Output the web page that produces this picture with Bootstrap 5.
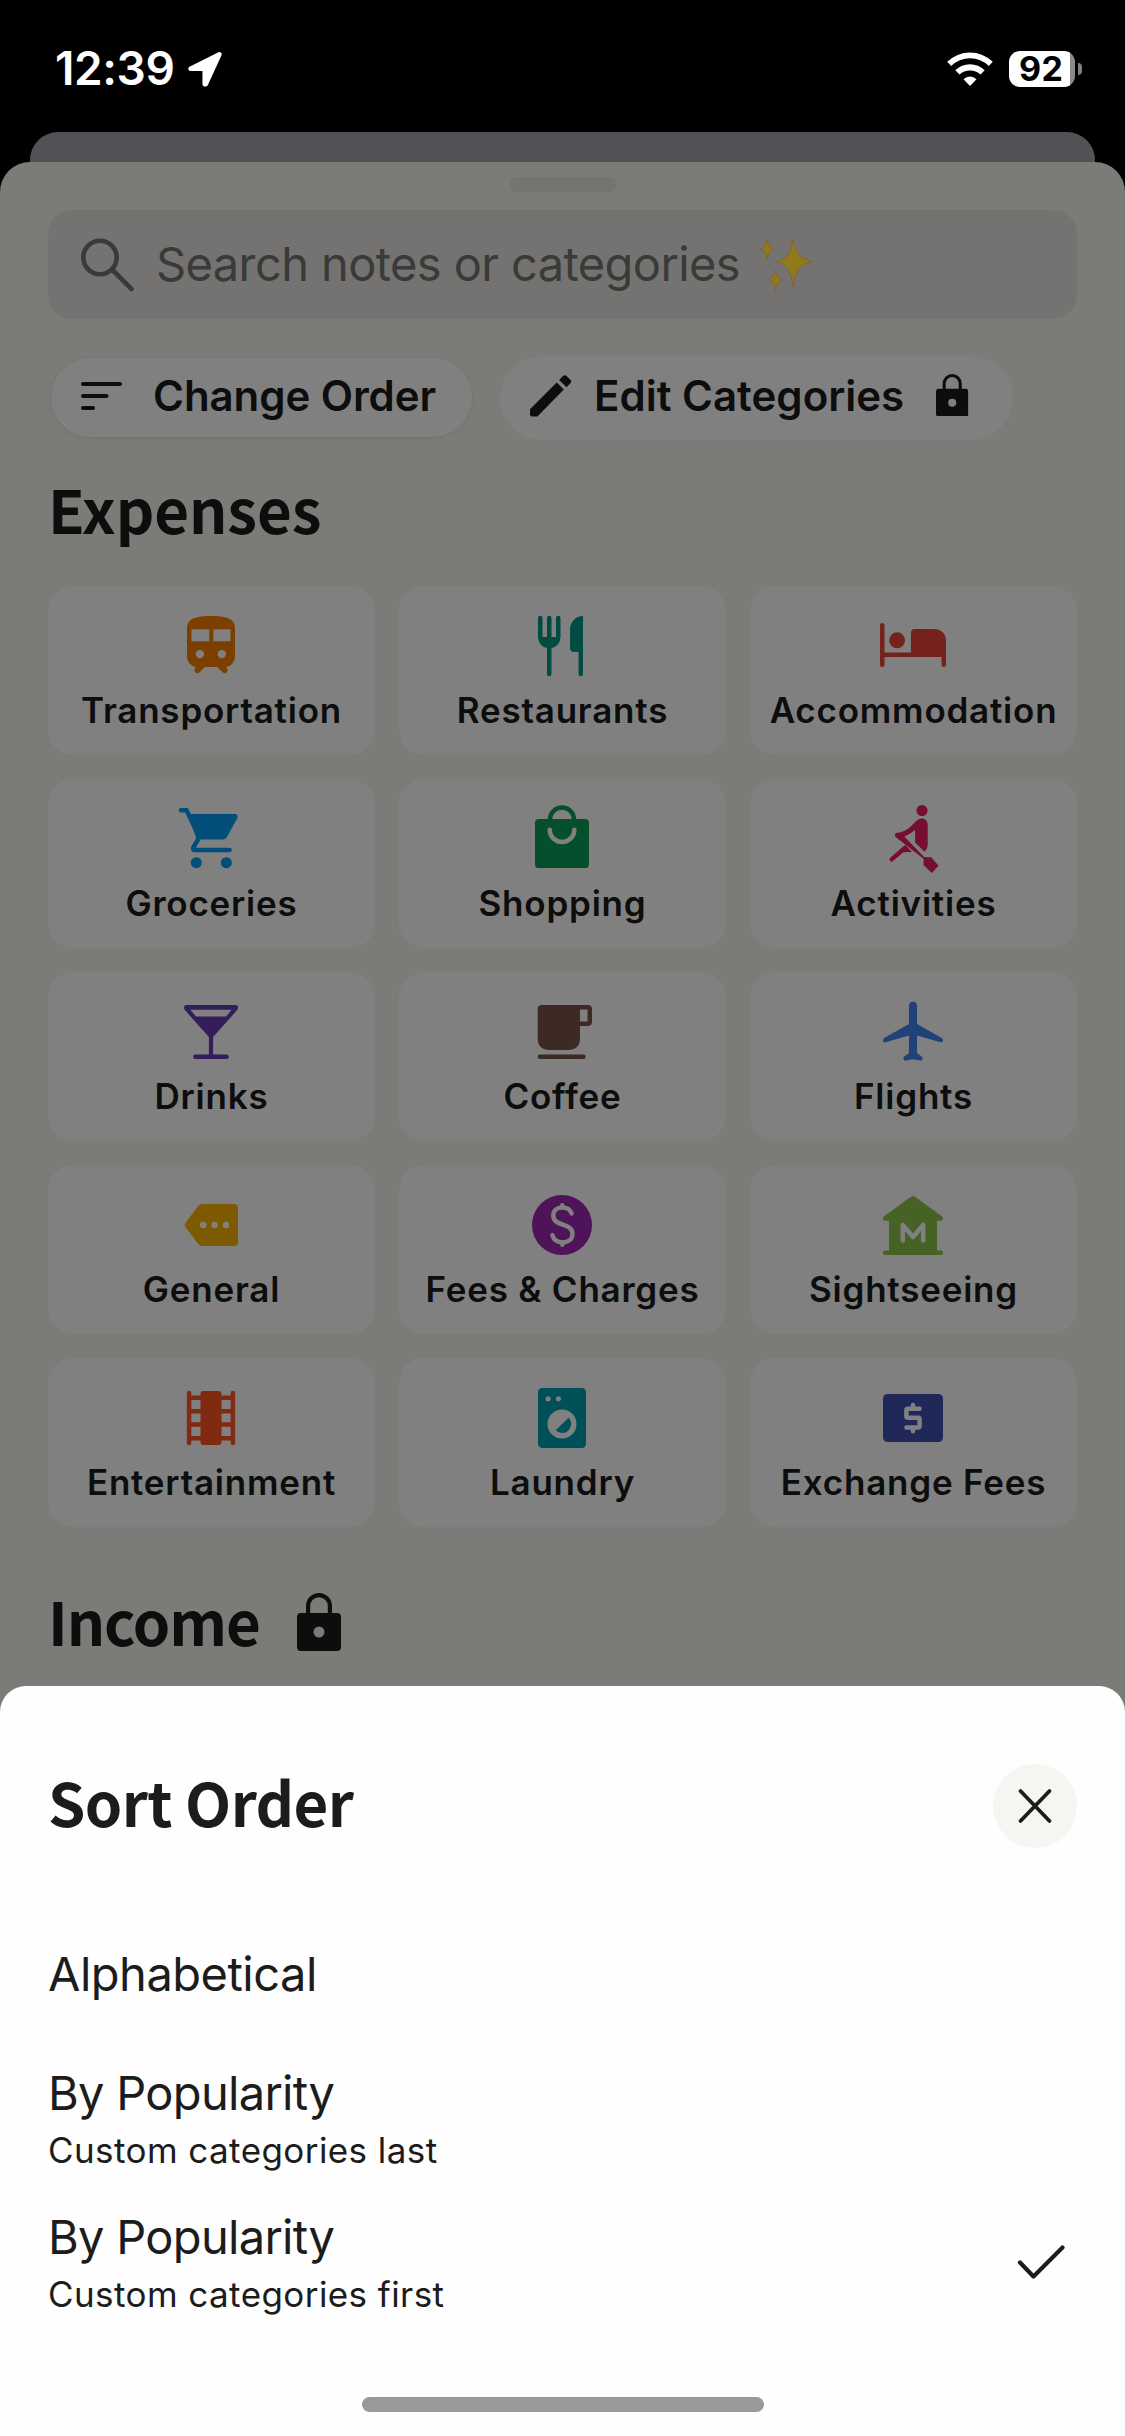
<!DOCTYPE html>
<html lang="en">
<head>
<meta charset="utf-8">
<meta name="viewport" content="width=device-width, initial-scale=1">
<title>Sort Order</title>
<link href="https://cdn.jsdelivr.net/npm/bootstrap@5.3.0/dist/css/bootstrap.min.css" rel="stylesheet">
<style>
  body { background: #000; color: #0d0d0d; font-family: Inter, "Liberation Sans", sans-serif; width: 1125px; height: 2436px; overflow: hidden; }
  svg { display: block; flex: none; }
  .status-bar { height: 132px; padding: 40px 43px 0 55px; }
  .clock { font-size: 46px; font-weight: 600; line-height: 56px; letter-spacing: -.4px; }
  .location-icon { margin: 11px 0 0 13px; }
  .status-right { margin-top: 11px; }
  .battery { width: 66px; height: 36px; border-radius: 11px; background: linear-gradient(90deg, #fff 61px, #8a8a8a 61px); color: #000; font-size: 34px; font-weight: 700; line-height: 36px; padding-left: 10px; letter-spacing: .5px; }
  .battery-tip { width: 4px; height: 12px; border-radius: 0 4px 4px 0; background: #7f7f7f; margin: 12px 0 0 3px; }
  .back-sheet { height: 30px; margin: 0 30px; border-radius: 28px 28px 0 0; background: #525256; }
  .app-sheet { height: 1554px; padding: 15px 48px 0; border-radius: 30px 30px 0 0; background: #7b7b78; }
  .grabber { width: 106px; height: 15px; border-radius: 6px; background: #747472; }
  .search-box { height: 109px; margin-top: 18px; padding: 0 33px; border-radius: 24px; background: #747371; color: #3a3a39; font-size: 47px; letter-spacing: -.6px; }
  .search-label { margin: 0 20px 1px 22px; line-height: 58px; }
  .pills { margin: 37px 0 0 3px; gap: 28px; color: #0d0d0d; }
  .pill { background: #808080; border-radius: 42px; font-size: 42px; font-weight: 600; line-height: 52px; }
  .pill-order { width: 421px; height: 79px; margin-top: 1.5px; padding: 0 0 2px 30px; box-shadow: 0 1px 4px rgba(0,0,0,.08); letter-spacing: -.07px; }
  .pill-order span { margin-left: 31px; }
  .pill-edit { width: 513px; height: 84px; padding: 0 0 5px 30px; }
  .pill-edit span { margin: 0 32px 0 22px; }
  .pill-lock { margin-bottom: 1px; }
  .title { font: 700 60px/60px "Noto Sans CJK SC", "Noto Sans", sans-serif; margin: 0; }
  .title-expenses { margin-top: 38px; letter-spacing: -.1px; }
  .tiles { display: grid; grid-template-columns: repeat(3, 1fr); gap: 24.1px 24px; margin-top: 48px; }
  .tile { height: 169px; padding-top: 24px; border-radius: 25px; background: #808080; font-size: 35px; font-weight: 600; line-height: 57px; letter-spacing: .78px; white-space: nowrap; }
  .tile svg { width: 72px; height: 72px; margin-right: 2px; fill: currentColor; }
  .tile span { color: #0d0d0d; }
  .c-orange { color: #7d3f00; } .c-teal { color: #004c43; } .c-red { color: #74221b; }
  .c-sky { color: #014e7a; } .c-green { color: #054f2c; } .c-pink { color: #750e31; }
  .c-violet { color: #331d5b; } .c-brown { color: #3d2a24; } .c-azure { color: #214279; }
  .c-amber { color: #7d5a00; } .c-purple { color: #4e1358; } .c-lime { color: #466225; }
  .c-rust { color: #802b11; } .c-cyan { color: #005059; } .c-navy { color: #1f2859; }
  .hole { fill: #808080; }
  .hole-line { fill: none; stroke: #808080; stroke-width: 1.5; stroke-linecap: round; stroke-linejoin: round; }
  .ink-line { fill: none; stroke: currentColor; stroke-width: 1.5; stroke-linecap: round; stroke-linejoin: round; }
  .income { margin-top: 63px; }
  .income .title { letter-spacing: -1.1px; }
  .income svg { margin: 3px 0 0 37px; }
  .bottom-sheet { height: 750px; margin-top: -30px; padding: 78px 48px 0; border-radius: 26px 26px 0 0; background: #fefefe; color: #1c1c1c; position: relative; }
  .sheet-title { padding-bottom: 10px; letter-spacing: -.6px; }
  .close-btn { width: 84px; height: 84px; background: #f6f5f2; }
  .option { font-size: 47px; line-height: 58px; letter-spacing: -.7px; }
  .option-alpha { margin-top: 97px; letter-spacing: -.5px; }
  .option-last { margin-top: 61px; }
  .option-first { margin-top: 37px; padding-right: 12px; }
  .option-note { font-size: 35px; line-height: 42px; letter-spacing: .42px; margin-top: 7px; }
  .home-bar { width: 402px; height: 15px; background: #999; margin-top: 82px; }
</style>
<script src="https://cdn.jsdelivr.net/npm/bootstrap@5.3.0/dist/js/bootstrap.bundle.min.js"></script>
</head>
<body>
<svg width="0" height="0" class="position-absolute">
  <symbol id="lock" viewBox="0 0 44 58"><path fill="#0d0d0d" fill-rule="evenodd" d="M9 20v-7a13 13 0 0 1 26 0v7h5a4 4 0 0 1 4 4v30a4 4 0 0 1-4 4H4a4 4 0 0 1-4-4V24a4 4 0 0 1 4-4zM13.200 20h17.600v-7a8.800 8.800 0 0 0-17.600 0zM22 33.500a5.500 5.500 0 1 0 0 11a5.500 5.500 0 1 0 0-11z"/></symbol>
</svg>

<header class="status-bar d-flex justify-content-between text-white">
  <div class="d-flex">
    <span class="clock">12:39</span>
    <svg class="location-icon" width="36" height="37" viewBox="0 0 36 37"><path d="M32.500 3.300 3.500 17.800h14.200v15.400h1z" fill="#fff" stroke="#fff" stroke-width="4.500" stroke-linejoin="round"/></svg>
  </div>
  <div class="status-right d-flex">
    <svg class="me-3" width="46" height="35" viewBox="0 0 46 35" fill="#fff"><path d="M23 35l-6.500-6.800a9.200 9.200 0 0 1 13 0z"/><path d="M12.500 23.600 8.300 19.300a21 21 0 0 1 29.400 0l-4.200 4.300a15.200 15.200 0 0 0-21 0z"/><path d="M4.200 15 .2 10.800a32.500 32.500 0 0 1 45.600 0l-4 4.200a26.800 26.800 0 0 0-37.600 0z"/></svg>
    <div class="battery">92</div>
    <div class="battery-tip"></div>
  </div>
</header>

<div class="back-sheet"></div>

<main class="app-sheet">
  <div class="grabber mx-auto"></div>
  <div class="search-box d-flex align-items-center">
    <svg width="53" height="54" viewBox="0 0 53 54" fill="none" stroke="#3a3a39" stroke-width="4.600" stroke-linecap="round"><circle cx="19" cy="19.500" r="16.700"/><path d="M31.500 32 50.500 51"/></svg>
    <span class="search-label">Search notes or categories</span>
    <svg width="56" height="54" viewBox="0 0 56 54" fill="#8f7b1d" stroke="#8b5f1d" stroke-width=".8"><path d="M33 1q1.500 20 20 22.500Q34.500 25.500 33 49 31.500 25.500 16 23.500 31.500 21.500 33 1z"/><path d="M7 1q.8 9 7.500 10.200Q7.800 12.300 7 22 6.200 12.300 0 11.200 6.200 10 7 1z"/><path d="M15.500 32q.8 8.500 7.500 9.800-6.700 1-7.500 10.700-.8-9.700-7.300-10.700 6.500-1.300 7.300-9.800z"/></svg>
  </div>

  <div class="pills d-flex align-items-start">
    <div class="pill pill-order d-flex align-items-center">
      <svg width="41" height="28" viewBox="0 0 41 28" stroke="#0d0d0d" stroke-width="4" stroke-linecap="round"><path d="M2 2h37M2 14h23.500M2 26h10"/></svg>
      <span>Change Order</span>
    </div>
    <div class="pill pill-edit d-flex align-items-center">
      <svg width="42" height="42" viewBox="0 0 42 42" fill="#0d0d0d"><path d="M0 34.200 26.700 7.500l7.100 7.100L7.400 41.500H2a2 2 0 0 1-2-2zM29.200 5l3.600-3.800a2.800 2.800 0 0 1 4 0l3.400 3.400a2.800 2.800 0 0 1 0 4l-3.700 3.600z"/></svg>
      <span>Edit Categories</span>
      <svg class="pill-lock" width="32.400" height="42.700"><use href="#lock"/></svg>
    </div>
  </div>

  <h2 class="title title-expenses">Expenses</h2>

  <section class="tiles">
    <div class="tile c-orange d-flex flex-column align-items-center">
      <svg viewBox="0 0 24 24"><path d="M12 2C7.500 2 4 2.700 4 6v9.500A3.500 3.500 0 0 0 7 19l-.3.300a1.050 1.050 0 0 0 1.300 1.600L9.900 19h4.200l1.900 1.900a1.050 1.050 0 0 0 1.300-1.600L17 19a3.500 3.500 0 0 0 3-3.500V6c0-3.300-3.500-4-8-4z"/><path class="hole" d="M5.500 6.400h5.900v4H5.500zM12.800 6.400h5.700v4h-5.700z"/><circle class="hole" cx="8.300" cy="14.700" r="1.400"/><circle class="hole" cx="15.600" cy="14.700" r="1.400"/></svg>
      <span>Transportation</span>
    </div>
    <div class="tile c-teal d-flex flex-column align-items-center">
      <svg viewBox="0 0 24 24"><path d="M4 2.700a.75.75 0 0 1 1.500 0V9H7V2.700a.75.75 0 0 1 1.500 0V9H10V2.700a.75.75 0 0 1 1.500 0V9a3.800 3.800 0 0 1-3 3.700v8.600a.75.75 0 0 1-1.500 0v-8.600A3.800 3.800 0 0 1 4 9zM19 2v19.300a.75.75 0 0 1-1.500 0V14H16a1.300 1.300 0 0 1-1.300-1.300V6.500C14.700 4 16.500 2 19 2z"/></svg>
      <span>Restaurants</span>
    </div>
    <div class="tile c-red d-flex flex-column align-items-center">
      <svg viewBox="0 0 24 24"><path d="M1 5.050a.75.75 0 0 1 1.500 0v9.150h8.800V7.500c0-.7.500-1.200 1.200-1.200h6.700A3.800 3.800 0 0 1 23 10.100v8.150a.75.75 0 0 1-1.500 0V15.700h-19v2.550a.75.75 0 0 1-1.500 0z"/><circle cx="6.700" cy="10.100" r="2.650"/></svg>
      <span>Accommodation</span>
    </div>

    <div class="tile c-sky d-flex flex-column align-items-center">
      <svg viewBox="0 0 24 24"><path d="M4.700 3.700H20a.9.900 0 0 1 .8 1.300l-3.500 6.300a1.700 1.700 0 0 1-1.500.9H7.200z"/><path class="ink-line" d="M2 2.450h1.900L8.100 11.500 6.100 14.800c-.3.500 0 .9.500.9h11.600"/><circle cx="7.100" cy="19.900" r="1.850"/><circle cx="17.100" cy="19.900" r="1.850"/></svg>
      <span>Groceries</span>
    </div>
    <div class="tile c-green d-flex flex-column align-items-center">
      <svg viewBox="0 0 24 24"><rect x="3" y="5.300" width="18" height="16.400" rx="1.300"/><path class="ink-line" d="M8 6V5.500a4 4 0 0 1 8 0V6"/><path class="hole-line" d="M7.900 8.900a4.100 4.100 0 0 0 8.200 0"/></svg>
      <span>Shopping</span>
    </div>
    <div class="tile c-pink d-flex flex-column align-items-center">
      <svg viewBox="0 0 24 24"><circle cx="15" cy="2.500" r="1.850"/><path fill-rule="evenodd" d="M6.700 9.900c2.400-.1 4.200-1.600 6-3.500.8-.9 1.600-1.200 2.300-1.200 1.100 0 1.900.9 1.900 2v6.600c0 1-.4 1.800-1.200 2.400l-3-3V8.900c-1.200 1-2.300 1.800-3.600 2.300l6.600 6.800 2.400.1 2.400 2.800-2.200 2.400-2.800-2.600v-2.100L6.200 11.300c-.5-.7-.2-1.300.5-1.400z"/><path d="M9.400 14l2.300 2.300-3.200.1z"/><path class="ink-line" d="M4.900 18.800 9.300 15"/></svg>
      <span>Activities</span>
    </div>

    <div class="tile c-violet d-flex flex-column align-items-center">
      <svg viewBox="0 0 24 24"><path fill-rule="evenodd" d="M3.900 3h16.200c.9 0 1.200 1 .6 1.700l-8 9v5.800h4.500a.75.75 0 0 1 0 1.500H6.800a.75.75 0 0 1 0-1.500h4.500v-5.800l-8-9C2.700 4 3 3 3.900 3zM5.100 4.600l1.900 2.200h10l1.900-2.200z"/></svg>
      <span>Drinks</span>
    </div>
    <div class="tile c-brown d-flex flex-column align-items-center">
      <svg viewBox="0 0 24 24"><path fill-rule="evenodd" d="M5.200 3h15.500c.8 0 1.300.5 1.300 1.300v4.400c0 .8-.5 1.300-1.300 1.300H18v4.600a3.400 3.400 0 0 1-3.400 3.400H7.300a3.400 3.400 0 0 1-3.400-3.400V4.300c0-.8.500-1.300 1.300-1.300zM18 4.500v4h2.500v-4zM4.650 19.500h14.500a.75.75 0 0 1 0 1.500H4.650a.75.75 0 0 1 0-1.500z"/></svg>
      <span>Coffee</span>
    </div>
    <div class="tile c-azure d-flex flex-column align-items-center">
      <svg viewBox="0 0 24 24"><path d="M10.650 3.300a1.350 1.350 0 0 1 2.700 0v6l8.100 4.600c.9.600.6 1.800-.3 1.500l-7.800-2.200v5.900l1.600 1.100c.5.500.2 1.500-.5 1.300L12 21.100l-2.450.4c-.7.200-1-.8-.5-1.300l1.600-1.100v-5.900l-7.800 2.200c-.9.300-1.200-.9-.3-1.500l8.100-4.600z"/></svg>
      <span>Flights</span>
    </div>

    <div class="tile c-amber d-flex flex-column align-items-center">
      <svg viewBox="0 0 24 24"><path d="M9 5h10.600A1.300 1.300 0 0 1 21 6.300v11.400a1.300 1.300 0 0 1-1.400 1.300H9a1.500 1.500 0 0 1-1.200-.6L3.400 12.600a1 1 0 0 1 0-1.200l4.400-5.800A1.500 1.500 0 0 1 9 5z"/><circle class="hole" cx="9.400" cy="12" r="1.100"/><circle class="hole" cx="13.200" cy="12" r="1.100"/><circle class="hole" cx="17" cy="12" r="1.100"/></svg>
      <span>General</span>
    </div>
    <div class="tile c-purple d-flex flex-column align-items-center">
      <svg viewBox="0 0 24 24"><circle cx="12" cy="12" r="10"/><path class="hole-line" d="M15.200 8.100C14.700 6.900 13.500 6.200 12.100 6.200c-1.800 0-3 1-3 2.600 0 3.900 6.400 2.300 6.400 6.200 0 1.700-1.400 2.800-3.300 2.800-1.700 0-3-.9-3.400-2.400M12.100 5.400v.8M12.100 17.800v.8"/></svg>
      <span>Fees &amp; Charges</span>
    </div>
    <div class="tile c-lime d-flex flex-column align-items-center">
      <svg viewBox="0 0 24 24"><path d="M11.300 2.600a1.200 1.200 0 0 1 1.400 0l8.900 6.500c.8.600.4 1.500-.5 1.500H20v9.900h1.250a.75.75 0 0 1 0 1.500H2.750a.75.75 0 0 1 0-1.500H4v-9.900H2.900c-.9 0-1.300-.9-.5-1.500z"/><path class="hole-line" d="M8.600 17.200v-5.200L12 16l3.400-4v5.200"/></svg>
      <span>Sightseeing</span>
    </div>

    <div class="tile c-rust d-flex flex-column align-items-center">
      <svg viewBox="0 0 24 24"><rect x="8.500" y="3" width="7" height="18" rx=".8"/><path class="ink-line" d="M4.700 3.700v16.600M19.300 3.700v16.600M4.700 5.250h14.600M4.700 9.750h14.600M4.700 14.200h14.600M4.700 18.750h14.600"/></svg>
      <span>Entertainment</span>
    </div>
    <div class="tile c-cyan d-flex flex-column align-items-center">
      <svg viewBox="0 0 24 24"><rect x="4" y="2" width="16" height="20" rx="1.400"/><circle class="hole" cx="7.400" cy="5.600" r=".85"/><circle class="hole" cx="10.800" cy="5.600" r=".85"/><circle class="hole" cx="12" cy="14" r="4.850"/><path d="M14.200 11.900 9.900 16.100a3 3 0 1 0 4.300-4.200z"/></svg>
      <span>Laundry</span>
    </div>
    <div class="tile c-navy d-flex flex-column align-items-center">
      <svg viewBox="0 0 24 24"><rect x="2" y="4" width="20" height="16" rx="1.500"/><path class="hole-line" d="M14.200 8.900H10.300a.5.500 0 0 0-.5.500v2a.5.500 0 0 0 .5.500h3.400a.5.500 0 0 1 .5.500v2.300a.5.500 0 0 1-.5.500H9.800M12 7.700v1.200M12 15.300v1.100"/></svg>
      <span>Exchange Fees</span>
    </div>
  </section>

  <div class="income d-flex">
    <h2 class="title">Income</h2>
    <svg width="44" height="58"><use href="#lock"/></svg>
  </div>
</main>

<section class="bottom-sheet">
  <div class="d-flex justify-content-between align-items-center">
    <h2 class="title sheet-title">Sort Order</h2>
    <div class="close-btn rounded-circle d-flex align-items-center justify-content-center">
      <svg width="36" height="36" viewBox="0 0 36 36" stroke="#1c1c1c" stroke-width="3.800" stroke-linecap="round"><path d="M3.500 3l29 30M32.500 3l-29 30"/></svg>
    </div>
  </div>
  <div class="option option-alpha">Alphabetical</div>
  <div class="option-last">
    <div class="option">By Popularity</div>
    <div class="option-note">Custom categories last</div>
  </div>
  <div class="option-first d-flex justify-content-between align-items-center">
    <div>
      <div class="option">By Popularity</div>
      <div class="option-note">Custom categories first</div>
    </div>
    <svg width="48" height="36" viewBox="0 0 48 36" fill="none" stroke="#1c1c1c" stroke-width="4.200" stroke-linecap="round" stroke-linejoin="round"><path d="M3 18.500 16.500 32.500 45.500 3.500"/></svg>
  </div>
  <div class="home-bar rounded-pill mx-auto"></div>
</section>
</body>
</html>
